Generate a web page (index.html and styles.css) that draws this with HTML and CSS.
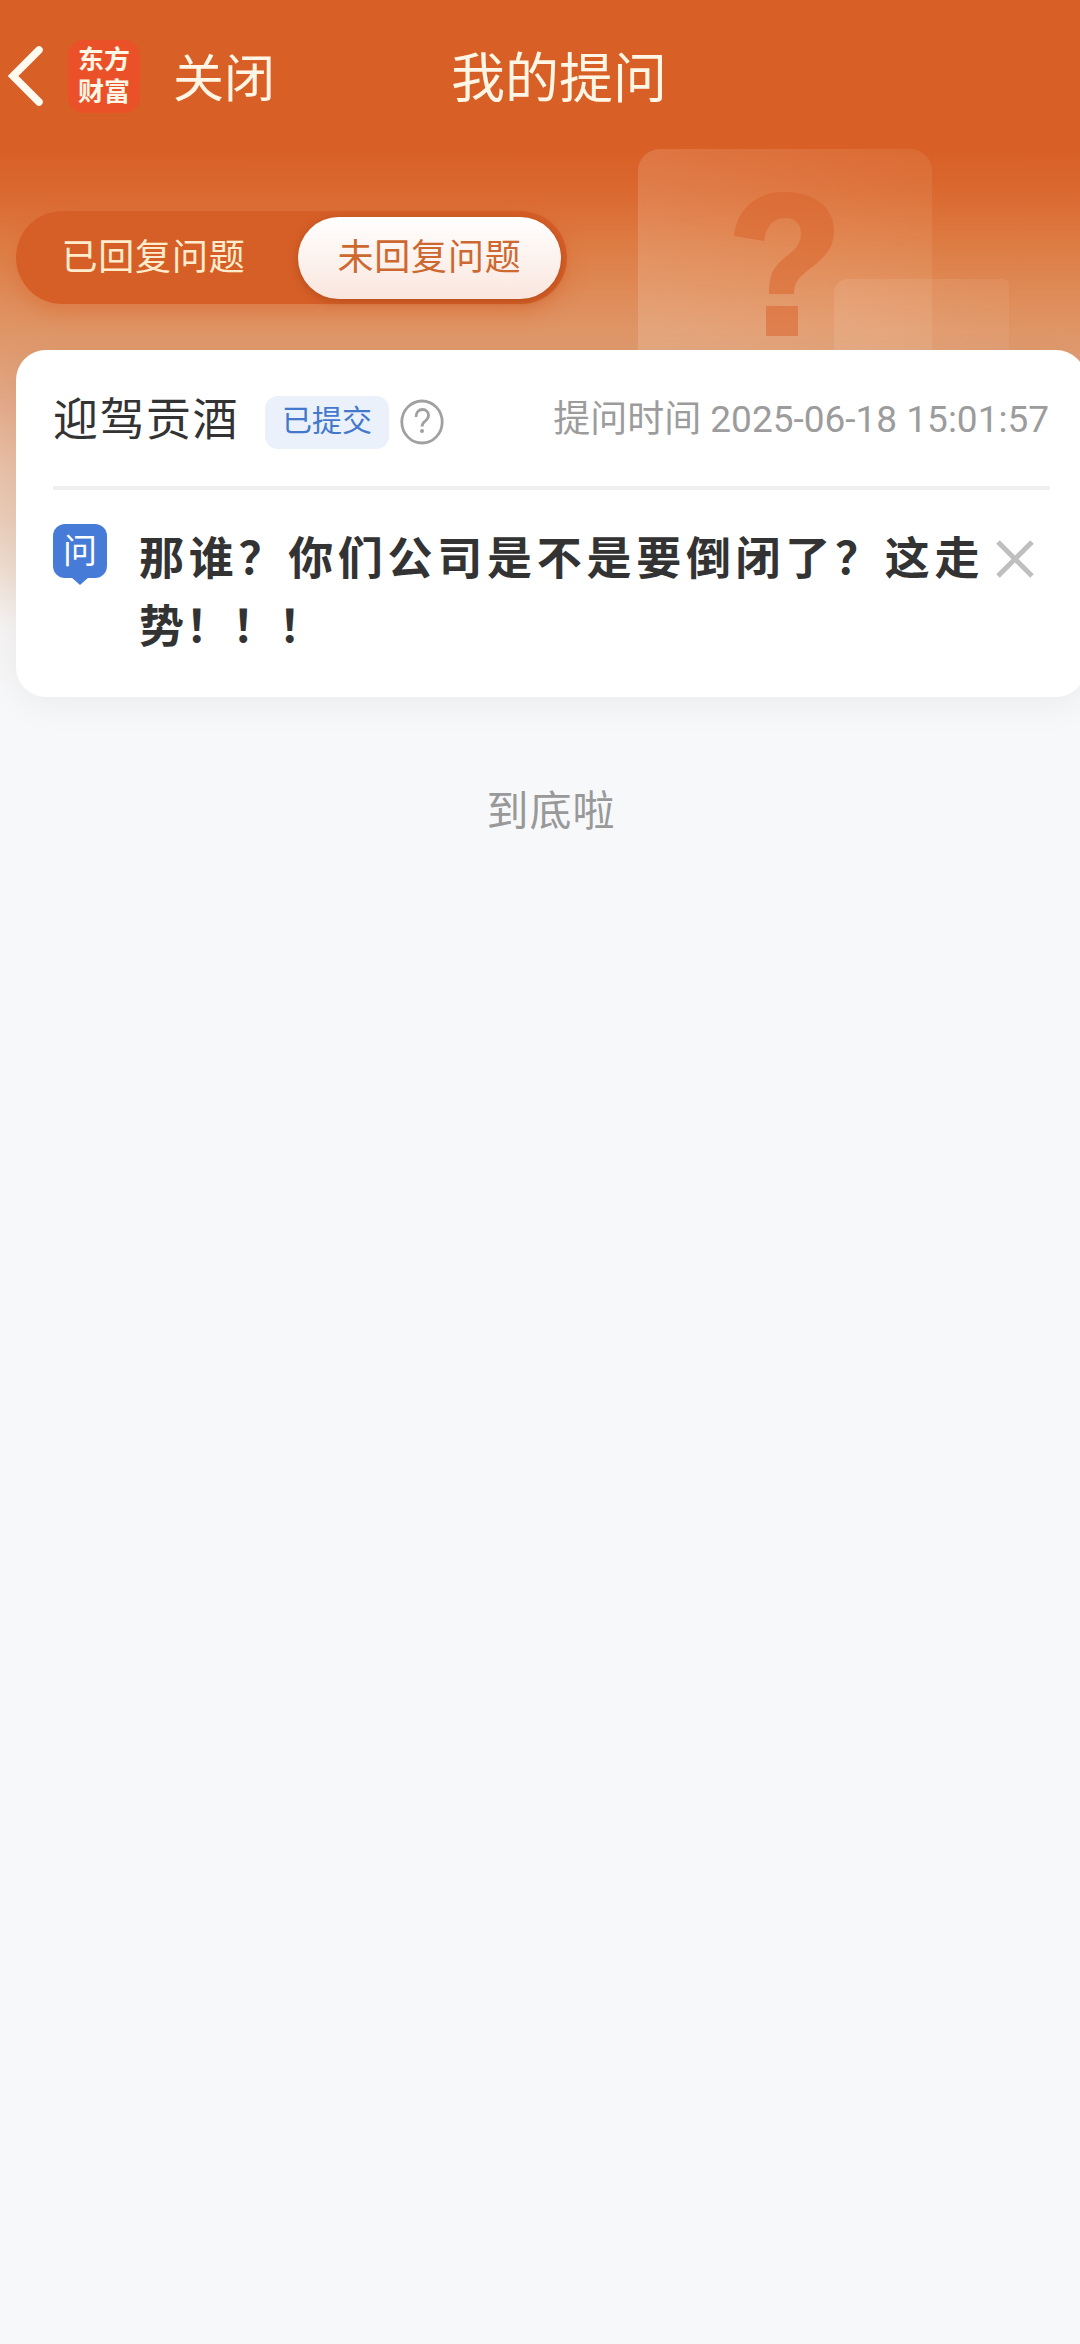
FILE: index.html
```
<!DOCTYPE html>
<html lang="zh-CN">
<head>
    <meta charset="UTF-8">
    <meta name="viewport" content="width=device-width, initial-scale=1.0">
    <title>我的提问</title>
    <link rel="stylesheet" href="styles.css">
</head>
<body>

<div class="page">
    <svg class="deco" width="380" height="201" viewBox="0 0 380 201">
        <defs>
            <linearGradient id="box" x1="0" y1="0.6" x2="1" y2="0.3">
                <stop offset="0" stop-color="#ffeede" stop-opacity="0.17"/>
                <stop offset="1" stop-color="#ffe0c0" stop-opacity="0.09"/>
            </linearGradient>
            <linearGradient id="small" x1="0" y1="0" x2="1" y2="0">
                <stop offset="0" stop-color="#fff0e0" stop-opacity="0.11"/>
                <stop offset="1" stop-color="#fff0e0" stop-opacity="0.06"/>
            </linearGradient>
        </defs>
        <path fill="url(#box)" d="M0 201V22A22 22 0 0 1 22 0H272A22 22 0 0 1 294 22V201Z"/>
        <path class="deco-mark" d="M96 87C99 60 118 43 147 43C177 43 196 59 196 82C196 98 188 107 173 119C161 128 156 133 156 145H131C131 124 136 117 150 106C160 98 163 93 163 84C163 75 157 69 147 69C135 69 128 78 126 92ZM128 157H160V187H128Z"/>
        <path fill="url(#small)" d="M196 201V144A14 14 0 0 1 210 130H365A6 6 0 0 1 371 136V201Z"/>
    </svg>

    <div class="header">
        <svg class="back" width="36" height="60" viewBox="0 0 36 60">
            <path d="M32 4L6 30L32 56"/>
        </svg>
        <div class="logo"><span>东方</span><span>财富</span></div>
        <span class="close">关闭</span>
        <h1>我的提问</h1>
    </div>

    <div class="tabs">
        <div class="tab">已回复问题</div>
        <div class="tab active">未回复问题</div>
    </div>

    <div class="card">
        <div class="card-head">
            <span class="stock">迎驾贡酒</span>
            <span class="status">已提交</span>
            <svg class="help" width="44" height="46" viewBox="0 0 44 46">
                <ellipse cx="22" cy="23" rx="20.2" ry="21"/>
                <path d="M16 18C16 13 19 10.500 22.500 10.500C26 10.500 28.500 13 28.500 16.500C28.500 22 22 22 22 27.500"/>
                <circle class="dot" cx="22" cy="32" r="2"/>
            </svg>
            <span class="time">提问时间 2025-06-18 15:01:57</span>
        </div>
        <div class="card-body">
            <div class="ask">问</div>
            <p class="question">那谁？你们公司是不是要倒闭了？这走势！！！</p>
            <svg class="remove" width="40" height="40" viewBox="0 0 40 40">
                <path d="M3 3L37 37M37 3L3 37"/>
            </svg>
        </div>
    </div>

    <p class="end">到底啦</p>
</div>

</body>
</html>
```
FILE: styles.css
```
* {
    box-sizing: border-box;
}
body {
    margin: 0;
    font-family: Roboto, "Noto Sans CJK SC", sans-serif;
    background-color: #f7f8fa;
}
.page {
    position: relative;
    height: 2344px;
    overflow: hidden;
    background: linear-gradient(#d85f26 0, #d85f26 145px, #da682f 190px, #dd7c44 245px, #df8e5c 305px, #df9a6e 350px, #e4a988 400px, #e8bea4 460px, #eacdb9 520px, #efddd1 570px, #f5f3f2 625px, #f7f8fa 700px);
}
.deco {
    position: absolute;
    top: 149px;
    left: 638px;
}
.deco-mark {
    fill: #d8622a;
    fill-opacity: 0.52;
}
.header {
    position: relative;
    display: flex;
    align-items: center;
    height: 152px;
    padding-left: 7px;
    color: #fff6e6;
}
.back {
    fill: none;
    stroke: #fffaf0;
    stroke-width: 7.5;
    stroke-linecap: round;
}
.logo {
    display: flex;
    flex-direction: column;
    justify-content: center;
    width: 72px;
    height: 73px;
    margin-left: 25px;
    border-radius: 16px;
    background-color: #ea5128;
    font-size: 26px;
    font-weight: bold;
    line-height: 32px;
    text-align: center;
}
.close {
    margin-left: 33px;
    padding-top: 7px;
    font-size: 51px;
    line-height: 76px;
}
.header h1 {
    margin: 0 0 0 176px;
    padding-top: 7px;
    font-size: 54px;
    font-weight: normal;
    line-height: 76px;
}
.tabs {
    position: relative;
    display: flex;
    align-items: center;
    width: 551px;
    height: 93px;
    margin: 59px 0 46px 16px;
    padding: 0 6px;
    border-radius: 47px;
    background-color: #d65f27;
    box-shadow: 0 8px 20px rgba(216, 95, 38, 0.4);
}
.tab {
    width: 276px;
    height: 82px;
    padding-right: 13px;
    border-radius: 41px;
    color: #ffeccd;
    font-size: 36px;
    letter-spacing: 0.8px;
    line-height: 83px;
    text-align: center;
}
.tab.active {
    width: 263px;
    padding-right: 0;
    background: linear-gradient(#fff, #fae6de);
    box-shadow: 0 2px 10px rgba(130, 50, 10, 0.4);
    color: #cd6930;
}
.card {
    position: relative;
    width: 1070px;
    height: 347px;
    margin-left: 16px;
    padding: 0 36px 0 37px;
    border-radius: 30px;
    background-color: #fff;
    box-shadow: 0 8px 36px rgba(0, 0, 0, 0.05);
}
.card-head {
    display: flex;
    align-items: center;
    height: 140px;
    border-bottom: 4px solid #efefef;
}
.stock {
    padding-bottom: 3px;
    color: #333;
    font-size: 45px;
    letter-spacing: 1.5px;
}
.status {
    height: 53px;
    margin: 8px 11px 0 26px;
    padding: 0 17px;
    border-radius: 13px;
    background-color: #eaf1fb;
    color: #4379cc;
    font-size: 30px;
    line-height: 50px;
}
.help {
    margin-top: 8px;
    fill: none;
    stroke: #a0a0a0;
    stroke-width: 2.8;
}
.help .dot {
    fill: #a0a0a0;
    stroke: none;
}
.time {
    margin-left: auto;
    padding: 0 1px 4px 0;
    color: #9c9c9c;
    font-size: 37px;
}
.card-body {
    display: flex;
    align-items: flex-start;
}
.ask {
    position: relative;
    width: 54px;
    height: 54px;
    margin-top: 34px;
    border-radius: 12px;
    background-color: #467cd8;
    color: #fff;
    font-size: 34px;
    line-height: 55px;
    text-align: center;
}
.ask::after {
    content: "";
    position: absolute;
    top: 53px;
    left: 18px;
    border: 9px solid transparent;
    border-top: 8px solid #467cd8;
    border-bottom: 0;
}
.question {
    width: 842px;
    margin: 36px 0 0 32px;
    color: #333;
    font-size: 45px;
    font-weight: bold;
    letter-spacing: 1.5px;
    line-height: 68px;
    text-align: justify;
}
.remove {
    margin: 49px 0 0 14px;
    fill: none;
    stroke: #bfbfbf;
    stroke-width: 5;
}
.end {
    margin: 83px 0 0;
    padding-left: 22px;
    color: #999;
    font-size: 42px;
    letter-spacing: 1px;
    line-height: 64px;
    text-align: center;
}
```
